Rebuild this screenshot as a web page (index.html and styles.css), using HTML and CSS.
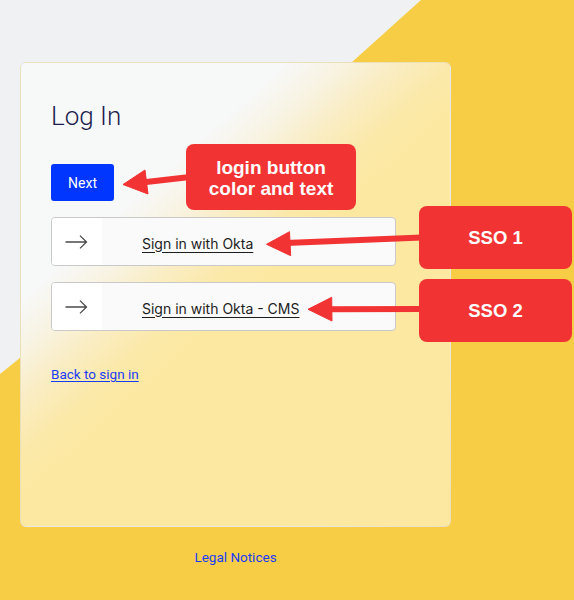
FILE: index.html
```html
<!DOCTYPE html>
<html>
<head>
    <meta name="viewport" content="width=device-width, initial-scale=1.0">
    <title>Log In</title>
    <link rel="stylesheet" href="styles.css">
</head>
<body>
    <svg class="bg-shape" width="574" height="600" viewBox="0 0 574 600">
        <path d="M421 0 H574 V600 H0 V374 C100 295 270 135 421 0 Z" fill="#f7cd46"/>
    </svg>

    <main class="page">
        <div class="card">
            <h1 class="title">Log In</h1>
            <button class="btn-next">Next</button>
            <div class="sso-list">
                <a class="sso-btn" href="#">
                    <span class="sso-icon">
                        <svg width="23" height="14" viewBox="0 0 23 14"><path d="M0.5 7 H21.5 M15 0.6 L21.5 7 L15 13.4" fill="none" stroke="#4a4a4a" stroke-width="1.3"/></svg>
                    </span>
                    <span class="sso-label"><span>Sign in with Okta</span></span>
                </a>
                <a class="sso-btn" href="#">
                    <span class="sso-icon">
                        <svg width="23" height="14" viewBox="0 0 23 14"><path d="M0.5 7 H21.5 M15 0.6 L21.5 7 L15 13.4" fill="none" stroke="#4a4a4a" stroke-width="1.3"/></svg>
                    </span>
                    <span class="sso-label"><span>Sign in with Okta - CMS</span></span>
                </a>
            </div>
            <a class="back-link" href="#">Back to sign in</a>
        </div>
        <div class="footer">
            <a href="#">Legal Notices</a>
        </div>
    </main>

    <!-- review annotations drawn on top of the page -->
    <div class="annotations">
        <svg class="arrows" width="574" height="600" viewBox="0 0 574 600">
            <g fill="#f23333" stroke="#f23333">
                <line x1="190" y1="177" x2="142" y2="182.5" stroke-width="6"/>
                <polygon points="123,184.5 145,170 148,194" stroke-width="1"/>
                <line x1="422" y1="237.5" x2="286" y2="243" stroke-width="6"/>
                <polygon points="266.5,244.3 289.5,231.7 290.7,255.7" stroke-width="1"/>
                <line x1="422" y1="309" x2="328" y2="309.3" stroke-width="6"/>
                <polygon points="308,309.3 331.7,297.3 332,321" stroke-width="1"/>
            </g>
        </svg>
        <div class="note note-login">login button<br>color and text</div>
        <div class="note note-sso1">SSO 1</div>
        <div class="note note-sso2">SSO 2</div>
    </div>
</body>
</html>
```

FILE: styles.css
```css
html, body {
    margin: 0;
    padding: 0;
}
body {
    width: 574px;
    height: 600px;
    overflow: hidden;
    position: relative;
    background: #f0f1f3;
    font-family: 'Roboto', 'Inter', sans-serif;
}
.bg-shape {
    position: absolute;
    left: 0;
    top: 0;
    z-index: 0;
}
.page {
    position: relative;
    z-index: 1;
    padding: 62px 0 0 20px;
}
/* frosted card: the blurred edge of the yellow shape is painted as a soft gradient */
.card {
    box-sizing: border-box;
    width: 431px;
    height: 465px;
    padding: 37px 30px 0 30px;
    border: 1px solid rgba(215, 215, 215, 0.45);
    border-radius: 6px;
    background: linear-gradient(138deg, #f7f8f8 0%, #f7f8f8 28%, #f8f3e2 34%, #faedc3 40%, #fbe9aa 46%, #fce8a0 52%, #fce8a0 100%);
    display: flex;
    flex-direction: column;
    align-items: flex-start;
}
.title {
    margin: 0;
    font-family: 'Roboto', sans-serif;
    font-weight: 300;
    font-size: 26px;
    line-height: 32px;
    color: #1d1d4f;
}
.btn-next {
    margin-top: 32px;
    width: 63px;
    height: 37px;
    border: 0;
    border-radius: 3px;
    background: #0036ff;
    color: #fff;
    font-family: 'Roboto', sans-serif;
    font-size: 14px;
    padding: 0;
}
.sso-list {
    margin-top: 16px;
    display: flex;
    flex-direction: column;
    gap: 16px;
}
.sso-btn {
    box-sizing: border-box;
    width: 345px;
    height: 49px;
    display: flex;
    border: 1px solid #c9c9c9;
    border-radius: 4px;
    overflow: hidden;
    background: #fafafa;
    text-decoration: none;
}
.sso-icon {
    width: 50px;
    background: #fff;
    display: flex;
    align-items: center;
    padding-left: 13px;
    box-sizing: border-box;
}
.sso-label {
    flex: 1;
    display: flex;
    align-items: center;
    padding: 3px 0 0 40px;
    font-family: 'Inter', sans-serif;
    font-size: 14px;
    color: #1d1d1d;
}
.sso-label span {
    text-decoration: underline;
    text-underline-offset: 3px;
}
.back-link {
    margin-top: 35px;
    font-size: 13.5px;
    line-height: 17px;
    color: #1a3cf5;
    text-decoration: underline;
    text-underline-offset: 2px;
}
.footer {
    width: 431px;
    margin-top: 22px;
    text-align: center;
    font-size: 13.5px;
    line-height: 17px;
}
.footer a {
    color: #1a3cf5;
    text-decoration: none;
}
.annotations {
    position: absolute;
    left: 0;
    top: 0;
    width: 574px;
    height: 600px;
    z-index: 2;
    pointer-events: none;
}
.arrows {
    position: absolute;
    left: 0;
    top: 0;
}
.note {
    position: absolute;
    display: flex;
    align-items: center;
    justify-content: center;
    text-align: center;
    background: #f23333;
    border-radius: 8px;
    color: #fff;
    font-family: 'Liberation Sans', Arial, sans-serif;
    font-weight: bold;
}
.note-login {
    left: 186px;
    top: 144px;
    width: 170px;
    height: 66px;
    font-size: 19px;
    line-height: 21.5px;
    padding-top: 2px;
    box-sizing: border-box;
}
.note-sso1, .note-sso2 {
    left: 419px;
    width: 153px;
    height: 63px;
    font-size: 18.5px;
}
.note-sso1 {
    top: 206px;
}
.note-sso2 {
    top: 279px;
}
```
